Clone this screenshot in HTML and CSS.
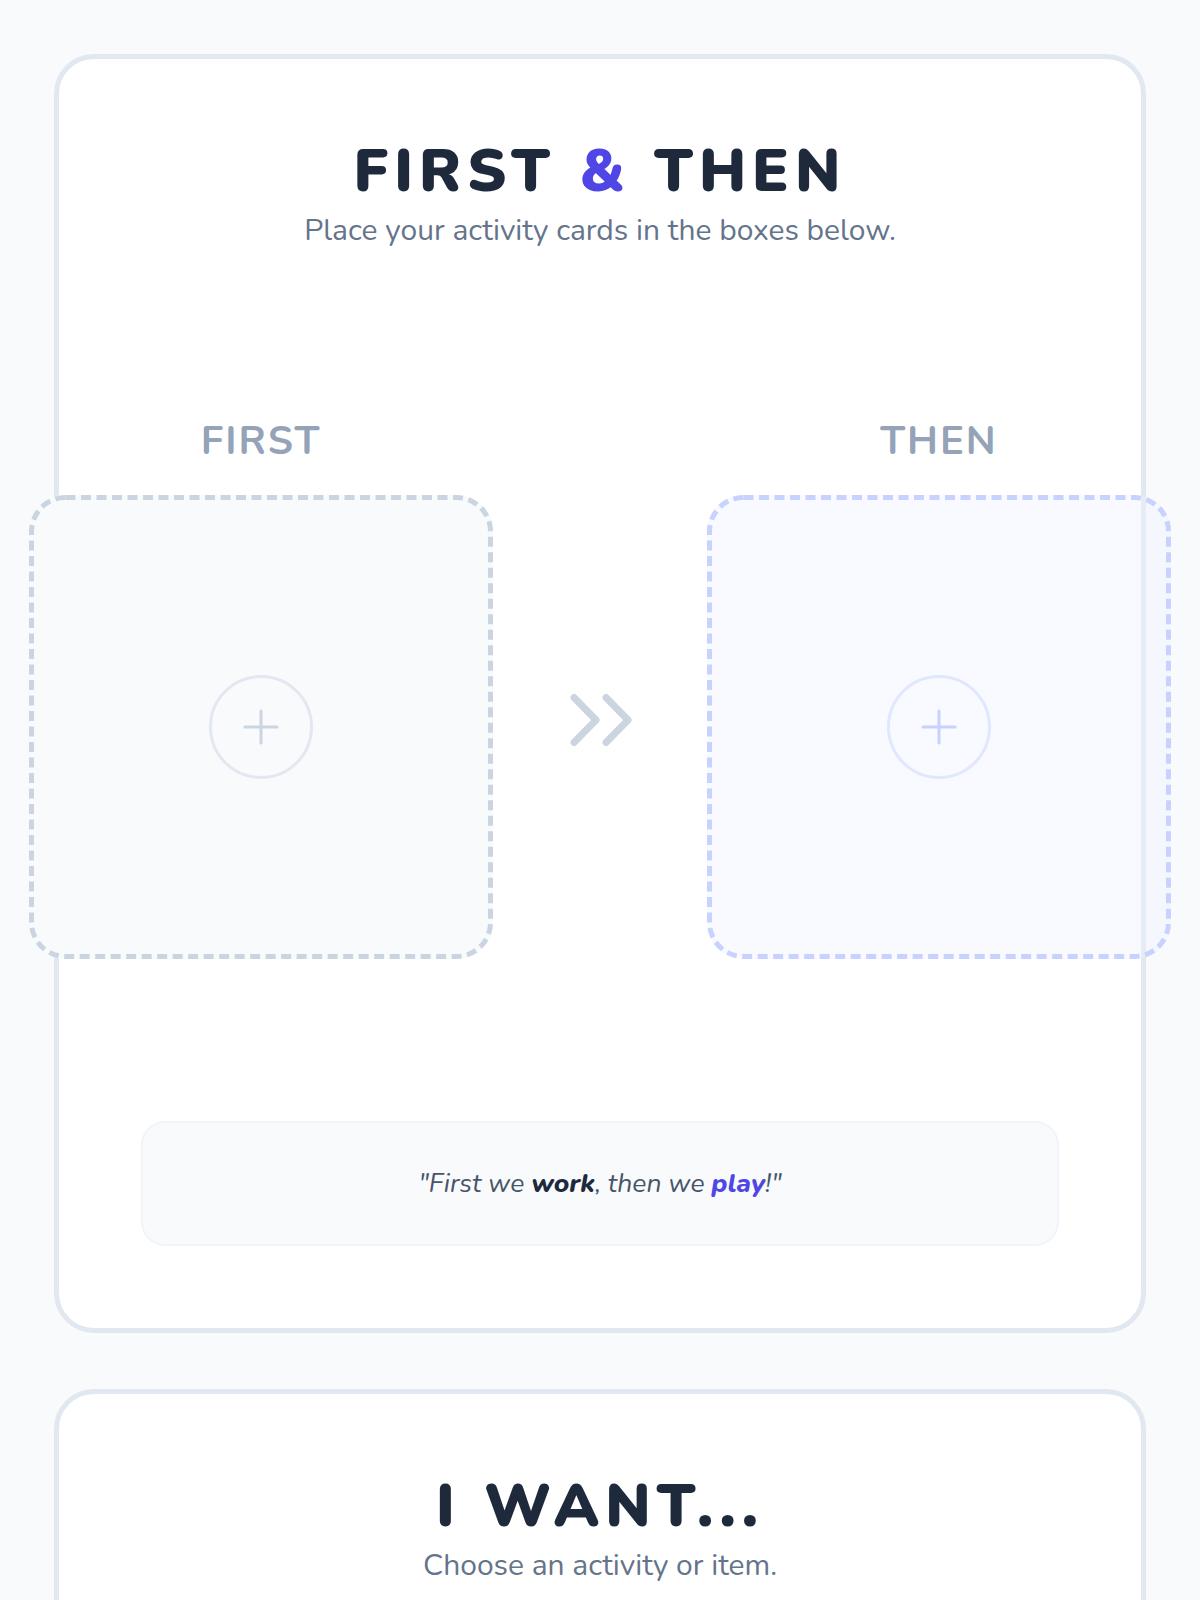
FILE: index.html
```html
<!DOCTYPE html>
<html lang="en">
<head>
<meta charset="utf-8">
<title>First &amp; Then</title>
<link rel="stylesheet" href="styles.css">
</head>
<body>
<main class="page">
  <section class="card">
    <header class="card-head">
      <h1 class="title">FIRST <span class="amp">&amp;</span> THEN</h1>
      <p class="subtitle">Place your activity cards in the boxes below.</p>
    </header>

    <div class="board">
      <div class="slot">
        <h2 class="slot-label">FIRST</h2>
        <div class="drop drop-first">
          <svg class="dash" viewBox="0 0 464 464" width="464" height="464" aria-hidden="true">
            <rect x="2.5" y="2.5" width="459" height="459" rx="34" ry="34" fill="none" stroke="currentColor" stroke-width="5" stroke-dasharray="10 5.5"/>
          </svg>
          <div class="add add-first">
            <svg class="plus" viewBox="0 0 36 36" width="36" height="36" aria-hidden="true">
              <path d="M18 2 V34 M2 18 H34" fill="none" stroke="currentColor" stroke-width="3" stroke-linecap="round"/>
            </svg>
          </div>
        </div>
      </div>

      <div class="arrow">
        <svg viewBox="0 0 80 80" width="80" height="80" aria-hidden="true">
          <path d="M14 17.5 L36 40 L14 62.5 M46 17.5 L68 40 L46 62.5" fill="none" stroke="currentColor" stroke-width="7" stroke-linecap="round" stroke-linejoin="round"/>
        </svg>
      </div>

      <div class="slot">
        <h2 class="slot-label">THEN</h2>
        <div class="drop drop-then">
          <svg class="dash" viewBox="0 0 464 464" width="464" height="464" aria-hidden="true">
            <rect x="2.5" y="2.5" width="459" height="459" rx="34" ry="34" fill="none" stroke="currentColor" stroke-width="5" stroke-dasharray="10 5.5"/>
          </svg>
          <div class="add add-then">
            <svg class="plus" viewBox="0 0 36 36" width="36" height="36" aria-hidden="true">
              <path d="M18 2 V34 M2 18 H34" fill="none" stroke="currentColor" stroke-width="3" stroke-linecap="round"/>
            </svg>
          </div>
        </div>
      </div>
    </div>

    <div class="quote">
      <p>"First we <strong class="work">work</strong>, then we <strong class="play">play</strong>!"</p>
    </div>
  </section>

  <section class="card card-want">
    <header class="card-head">
      <h1 class="title">I WANT...</h1>
      <p class="subtitle">Choose an activity or item.</p>
    </header>
    <div class="want-area"></div>
  </section>
</main>
</body>
</html>
```

FILE: styles.css
```css
* {
  box-sizing: border-box;
}

html, body {
  margin: 0;
  padding: 0;
}

body {
  background: #f8fafc;
  font-family: "Nunito", "Lato", "Open Sans", sans-serif;
  color: #1e293b;
}

.page {
  padding: 54px 54px 0;
  display: flex;
  flex-direction: column;
  gap: 56px;
}

.card {
  background: #ffffff;
  border: 5px solid #e2e8f0;
  border-radius: 40px;
  padding: 82px;
  display: flex;
  flex-direction: column;
  align-items: stretch;
}

.card-head {
  display: flex;
  flex-direction: column;
  align-items: center;
  text-align: center;
}

.title {
  margin: 0;
  font-size: 60px;
  line-height: 60px;
  font-weight: 900;
  letter-spacing: 0.1em;
  color: #1e293b;
}

.amp {
  color: #4f46e5;
}

.subtitle {
  margin: 10px 0 0;
  font-size: 30px;
  line-height: 40px;
  font-weight: 400;
  color: #64748b;
}

.board {
  margin-top: 170px;
  display: flex;
  justify-content: center;
  align-items: flex-end;
  gap: 67px;
}

.slot {
  flex: 0 0 464px;
  display: flex;
  flex-direction: column;
  align-items: center;
}

.slot-label {
  margin: 0 0 34px;
  font-size: 40px;
  line-height: 40px;
  font-weight: 700;
  letter-spacing: 0.05em;
  color: #94a3b8;
}

.drop {
  position: relative;
  width: 464px;
  height: 464px;
  border-radius: 36px;
  display: flex;
  align-items: center;
  justify-content: center;
}

.dash {
  position: absolute;
  inset: 0;
  display: block;
}

.drop-first {
  background: #f8fafc;
  color: #cbd5e1;
}

.drop-then {
  background: rgba(238, 242, 255, 0.4);
  color: #c7d2fe;
}

.add {
  width: 104px;
  height: 104px;
  border-radius: 50%;
  border: 3px solid #e2e8f0;
  display: flex;
  align-items: center;
  justify-content: center;
  color: #cbd5e1;
}

.add-then {
  border-color: #e0e7ff;
  color: #c7d2fe;
}

.plus {
  display: block;
}

.arrow {
  flex: 0 0 80px;
  height: 464px;
  padding-bottom: 14px;
  display: flex;
  align-items: center;
  justify-content: center;
  color: #cbd5e1;
}

.arrow svg {
  display: block;
}

.quote {
  margin-top: 162px;
  background: #f8fafc;
  border: 2px solid #f1f5f9;
  border-radius: 24px;
  padding: 44px 24px;
  text-align: center;
}

.quote p {
  margin: 0;
  font-size: 26.5px;
  line-height: 33px;
  font-style: italic;
  color: #475569;
}

.work {
  font-weight: 800;
  color: #1e293b;
}

.play {
  font-weight: 800;
  color: #4f46e5;
}

.want-area {
  min-height: 400px;
}
```
